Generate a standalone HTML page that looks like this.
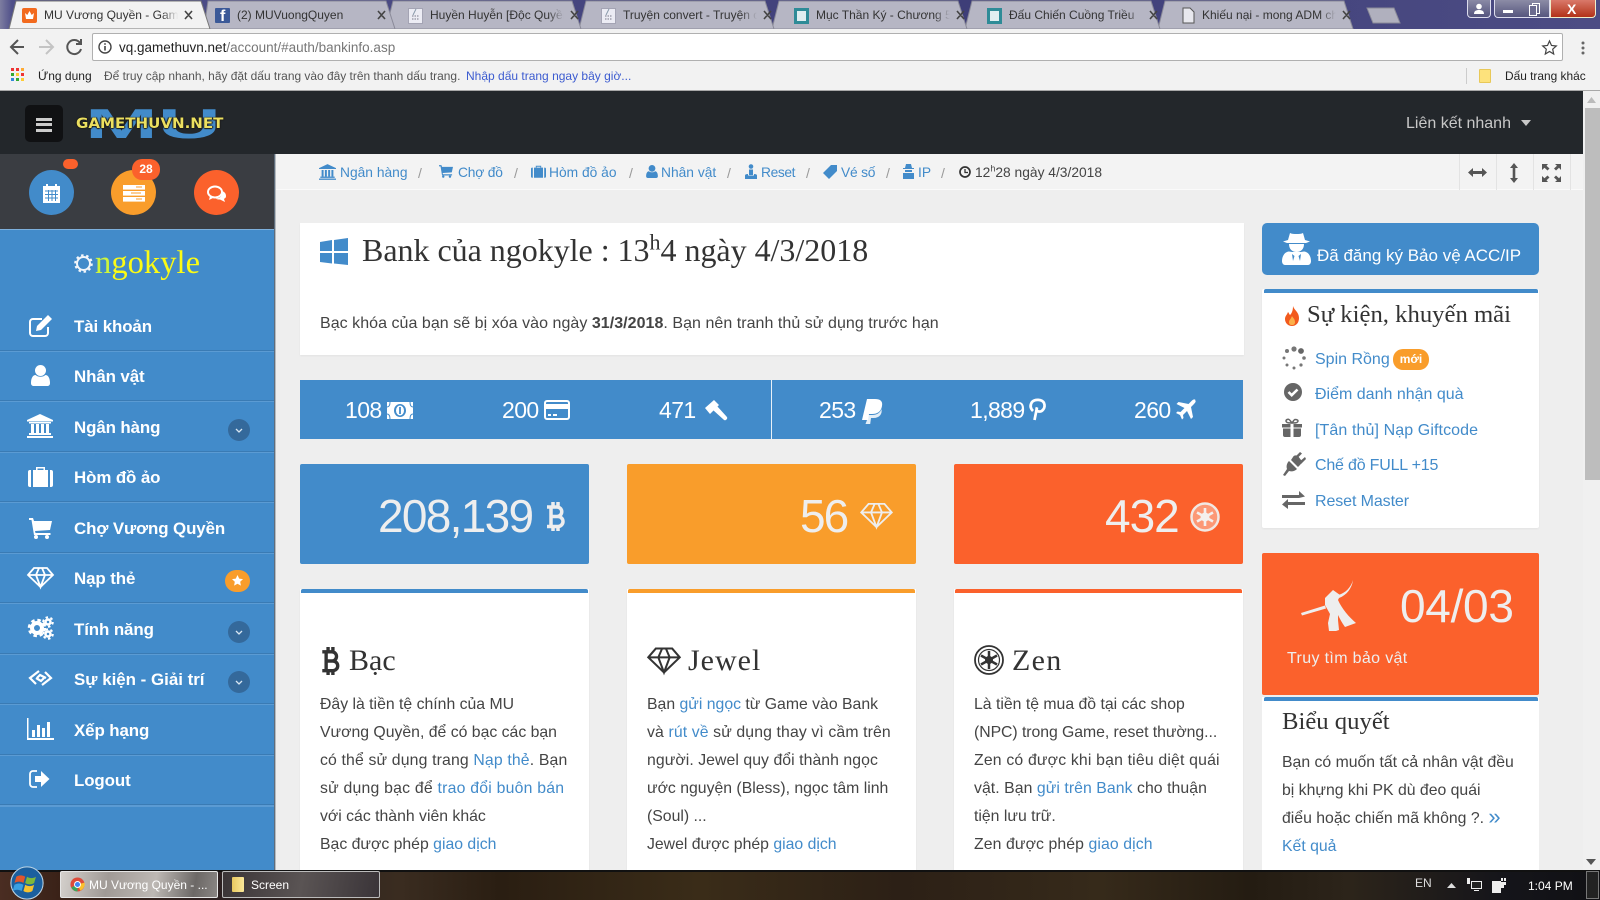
<!DOCTYPE html>
<html lang="vi"><head><meta charset="utf-8"><title>MU Vương Quyền</title>
<style>
*{box-sizing:border-box}
html,body{margin:0;padding:0;width:1600px;height:900px;overflow:hidden;background:#eee;font-family:"Liberation Sans",sans-serif;color:#444}
.a{position:absolute}
.t{position:absolute;white-space:nowrap;line-height:20px;font-size:15.8px}
.s{font-family:"Liberation Serif",serif;color:#333}
a,.l{color:#428bca;text-decoration:none}
svg{position:absolute;overflow:visible}
.tab{font-size:12px;color:#333;top:5px;width:134px;overflow:hidden;-webkit-mask-image:linear-gradient(90deg,#000 88%,transparent);mask-image:linear-gradient(90deg,#000 88%,transparent)}
.bc{font-size:13.8px;top:163px;color:#428bca}
.sl{color:#999;font-size:14px;top:163px}
.m{font-size:16.9px;font-weight:bold;color:#fff;left:74px;letter-spacing:-.1px}
.ln{left:0;width:274px;height:2px;background:#5b9bd3;border-top:1px solid #3a7bb4}
.cir{left:228px;width:22px;height:22px;border-radius:50%;background:#34699b}
.st{font-size:23px;color:#fff;top:400px;line-height:20px;letter-spacing:-.6px}
.card{background:#fff;top:589px;height:281px;box-shadow:0 1px 2px rgba(0,0,0,.05)}
.bar{left:1px;right:1px;top:0;height:4px;border-radius:2px 2px 0 0}
.num{font-size:46px;color:#eee;line-height:50px;top:491px}
.box{top:464px;height:100px;border-radius:2px}
.li{font-size:16px;color:#428bca;left:1315px}
</style></head><body>

<!-- browser chrome -->
<div class="a" style="left:0;top:0;width:1600px;height:29px;background:linear-gradient(90deg,#7d7da0 0,#50508a 12px,#3e3e78 60%,#4c4c84 100%)"></div>
<svg style="left:0;top:0" width="1600" height="30">
<g fill="#b6b6c4" stroke="#8a8a98" stroke-width="1">
<polygon points="1158,29 1165,1 1344,1 1353,29"/>
<polygon points="965,29 972,1 1151,1 1160,29"/>
<polygon points="772,29 779,1 958,1 967,29"/>
<polygon points="579,29 586,1 765,1 774,29"/>
<polygon points="386,29 393,1 572,1 581,29"/>
<polygon points="204,29 208,1 386,1 395,29" />
<polygon points="1373,23 1367,8 1394,8 1400,23" fill="#b0b0be"/>
</g>
<polygon points="9,29 16,1 201,1 210,29" fill="#f2f2f2" stroke="#777"/>
</svg>
<!-- favicons -->
<div class="a" style="left:22px;top:8px;width:15px;height:15px;background:#f26a1e;border-radius:2px"></div>
<svg style="left:24px;top:10px" width="11" height="11" viewBox="0 0 11 11"><path d="M1 3l2.300 2L5.500 1l2.200 4L10 3 9 9H2z" fill="#fff"/></svg>
<div class="a" style="left:215px;top:8px;width:15px;height:15px;background:#3b5998;border-radius:1px"></div>
<div class="t" style="left:220px;top:7px;font-size:16px;font-weight:bold;color:#fff">f</div>
<svg style="left:408px;top:8px" width="15" height="16" viewBox="0 0 15 16"><rect x=".5" y=".5" width="14" height="15" fill="#ececf4" stroke="#a4a4b4"/><path d="M4 8h7M4 11h7" stroke="#778" stroke-width="1" stroke-dasharray="1.500 1"/><path d="M8 1L5 7" stroke="#89a" /></svg>
<svg style="left:601px;top:8px" width="15" height="16" viewBox="0 0 15 16"><rect x=".5" y=".5" width="14" height="15" fill="#ececf4" stroke="#a4a4b4"/><path d="M4 8h7M4 11h7" stroke="#778" stroke-width="1" stroke-dasharray="1.500 1"/><path d="M8 1L5 7" stroke="#89a" /></svg>
<div class="a" style="left:794px;top:8px;width:15px;height:16px;background:#dfeef0;border:3px solid #2e8b97"></div>
<div class="a" style="left:987px;top:8px;width:15px;height:16px;background:#dfeef0;border:3px solid #2e8b97"></div>
<svg style="left:1182px;top:7px" width="13" height="17" viewBox="0 0 13 17"><path d="M1 1h7l4 4v11H1z" fill="#e8e8ee" stroke="#555"/></svg>
<div class="t tab" style="left:44px">MU Vương Quyền - Game</div>
<div class="t tab" style="left:237px">(2) MUVuongQuyen</div>
<div class="t tab" style="left:430px">Huyền Huyễn [Độc Quyền]</div>
<div class="t tab" style="left:623px">Truyện convert - Truyện chữ</div>
<div class="t tab" style="left:816px">Mục Thần Ký - Chương 5 abc</div>
<div class="t tab" style="left:1009px">Đấu Chiến Cuồng Triều</div>
<div class="t tab" style="left:1202px">Khiếu nại - mong ADM cho</div>
<svg style="left:0;top:0" width="1400" height="30" fill="none" stroke="#444" stroke-width="1.600">
<path d="M185 11l7 8M192 11l-7 8M378 11l7 8M385 11l-7 8M571 11l7 8M578 11l-7 8M764 11l7 8M771 11l-7 8M957 11l7 8M964 11l-7 8M1150 11l7 8M1157 11l-7 8M1343 11l7 8M1350 11l-7 8"/>
</svg>
<!-- window controls -->
<div class="a" style="left:1467px;top:0;width:24px;height:18px;background:linear-gradient(#8a8aa6,#54547e);border:1px solid #dde;border-top:0;border-radius:0 0 4px 4px"></div>
<svg style="left:1473px;top:3px" width="12" height="12"><circle cx="6" cy="3.500" r="2.800" fill="#fff"/><path d="M1 11c0-3 2-4 5-4s5 1 5 4z" fill="#fff"/></svg>
<div class="a" style="left:1494px;top:0;width:56px;height:18px;background:linear-gradient(#8c8ca6,#56567e);border:1px solid #dde;border-top:0;border-radius:0 0 0 4px"></div>
<div class="a" style="left:1503px;top:10px;width:10px;height:3px;background:#fff"></div>
<div class="a" style="left:1532px;top:3px;width:8px;height:11px;border:1.500px solid #fff"></div>
<div class="a" style="left:1529px;top:5px;width:8px;height:11px;border:1.500px solid #fff;background:#6c6c90"></div>
<div class="a" style="left:1550px;top:0;width:46px;height:18px;background:linear-gradient(#d9796a,#b23218);border:1px solid #eec;border-top:0;border-radius:0 0 4px 0"></div>
<div class="t" style="left:1567px;top:2px;font-size:14px;line-height:14px;font-weight:bold;color:#fff">X</div>

<!-- toolbar -->
<div class="a" style="left:0;top:29px;width:1600px;height:62px;background:#f2f2f2;border-bottom:1px solid #a8a8a8"></div>
<svg style="left:0;top:30px" width="90" height="30" fill="none" stroke-width="2">
<path d="M24 17H12M18 10l-7 7 7 7" stroke="#555"/>
<path d="M39 17h13M46 10l7 7-7 7" stroke="#c4c4c4"/>
<path d="M80 13a7 7 0 1 0 1 6M81 9v5h-5" stroke="#555"/>
</svg>
<div class="a" style="left:92px;top:33px;width:1471px;height:28px;background:#fff;border:1px solid #b0b0b0;border-radius:2px"></div>
<svg style="left:98px;top:40px" width="14" height="14" viewBox="0 0 14 14"><circle cx="7" cy="7" r="6" fill="none" stroke="#444" stroke-width="1.400"/><path d="M7 6v4.500M7 3.200v1.600" stroke="#444" stroke-width="1.600"/></svg>
<div class="t" style="left:119px;top:38px;font-size:13.500px"><span style="color:#222">vq.gamethuvn.net</span><span style="color:#777">/account/#auth/bankinfo.asp</span></div>
<svg style="left:1542px;top:40px" width="15" height="15" viewBox="0 0 15 15"><path d="M7.500 1l2 4.500 4.800.5-3.600 3.200 1 4.800-4.200-2.500-4.200 2.500 1-4.800L.7 6l4.800-.5z" fill="none" stroke="#444" stroke-width="1.200"/></svg>
<svg style="left:1580px;top:41px" width="6" height="14"><circle cx="3" cy="2" r="1.500" fill="#666"/><circle cx="3" cy="7" r="1.500" fill="#666"/><circle cx="3" cy="12" r="1.500" fill="#666"/></svg>
<!-- bookmarks -->
<svg style="left:11px;top:68px" width="14" height="14"><g><rect width="3" height="3" fill="#e33"/><rect x="5" width="3" height="3" fill="#e33"/><rect x="10" width="3" height="3" fill="#fa3"/><rect y="5" width="3" height="3" fill="#3a3"/><rect x="5" y="5" width="3" height="3" fill="#fc3"/><rect x="10" y="5" width="3" height="3" fill="#e33"/><rect y="10" width="3" height="3" fill="#38d"/><rect x="5" y="10" width="3" height="3" fill="#3a3"/><rect x="10" y="10" width="3" height="3" fill="#fc3"/></g></svg>
<div class="t" style="left:38px;top:66px;font-size:12px;color:#222">Ứng dụng</div>
<div class="t" style="left:104px;top:66px;font-size:11.950px;color:#555">Để truy cập nhanh, hãy đặt dấu trang vào đây trên thanh dấu trang.</div>
<div class="t" style="left:466px;top:66px;font-size:12px;color:#3c5bd0">Nhập dấu trang ngay bây giờ...</div>
<div class="a" style="left:1466px;top:68px;width:1px;height:16px;background:#ccc"></div>
<div class="a" style="left:1479px;top:69px;width:12px;height:14px;background:#fde27c;border:1px solid #e8c858;border-radius:1px"></div>
<div class="t" style="left:1505px;top:66px;font-size:11.900px;color:#222">Dấu trang khác</div>

<!-- top nav -->
<div class="a" style="left:0;top:91px;width:1583px;height:63px;background:#23272b"></div>
<div class="a" style="left:25px;top:105px;width:38px;height:37px;background:#101113;border-radius:5px"></div>
<div class="a" style="left:36px;top:118px;width:16px;height:3px;background:#ccc"></div>
<div class="a" style="left:36px;top:123px;width:16px;height:3px;background:#ccc"></div>
<div class="a" style="left:36px;top:129px;width:16px;height:3px;background:#ccc"></div>
<div class="t" style="left:85px;top:106px;font-size:42px;line-height:36px;font-weight:bold;color:#428bca;transform:scaleX(2.080);transform-origin:0 0">MU</div>
<div class="t" style="left:76px;top:114px;font-family:'DejaVu Sans',sans-serif;font-size:14px;font-weight:bold;color:#ece060;text-shadow:0 0 1px #000,0 1px 1px #222,1px 0 1px #222,-1px 0 1px #222;transform:scaleX(1.075);transform-origin:0 0">GAMETHUVN.NET</div>
<div class="t" style="left:1406px;top:114px;font-size:16px;color:#c8c8c8">Liên kết nhanh</div>
<svg style="left:1521px;top:120px" width="11" height="7"><path d="M0 0h10L5 6z" fill="#c8c8c8"/></svg>

<!-- scrollbar -->
<div class="a" style="left:1583px;top:91px;width:17px;height:779px;background:#f0f0f0"></div>
<div class="a" style="left:1585px;top:108px;width:15px;height:372px;background:#bdbdbd"></div>
<svg style="left:1587px;top:97px" width="10" height="7"><path d="M0 6h9L4.500 0z" fill="#bbb"/></svg>
<svg style="left:1586px;top:859px" width="10" height="7"><path d="M0 0h10L5 6z" fill="#555"/></svg>

<!-- sidebar -->
<div class="a" style="left:0;top:154px;width:274px;height:75px;background:#3a3d42"></div>
<div class="a" style="left:0;top:229px;width:274px;height:641px;background:#428bca;border-top:1px solid #7db0dc"></div>
<div class="a" style="left:274px;top:154px;width:2px;height:716px;background:linear-gradient(90deg,#33465a,rgba(0,0,0,.05))"></div>
<div class="a" style="left:29px;top:170px;width:45px;height:45px;border-radius:50%;background:#428bca"></div>
<div class="a" style="left:111px;top:170px;width:45px;height:45px;border-radius:50%;background:#f99d2b"></div>
<div class="a" style="left:194px;top:170px;width:45px;height:45px;border-radius:50%;background:#fb612c"></div>
<div class="a" style="left:63px;top:159px;width:15px;height:10px;border-radius:5px;background:#fb612c"></div>
<div class="a" style="left:132px;top:159px;width:28px;height:21px;border-radius:10px;background:#fb612c;color:#fff;font-size:12px;font-weight:bold;text-align:center;line-height:21px">28</div>
<svg style="left:42px;top:183px" width="19" height="20" viewBox="0 0 19 20"><path d="M1 3h3V1h2v2h7V1h2v2h3v17H1z" fill="#fff"/><path d="M3 8h13M3 11.500h13M3 15h13M6.500 7v11M10 7v11M13.500 7v11" stroke="#428bca" stroke-width="1" fill="none"/></svg>
<svg style="left:123px;top:185px" width="22" height="17" viewBox="0 0 22 17" fill="#fff"><rect width="22" height="4.600"/><rect y="6" width="22" height="4.600"/><rect y="12" width="22" height="4.600"/><path d="M13 2h6M8 8h10M13 14h6" stroke="#f99d2b" stroke-width="1"/></svg>
<svg style="left:206px;top:185px" width="21" height="18" viewBox="0 0 21 18"><ellipse cx="9" cy="7" rx="7" ry="5.500" fill="none" stroke="#fff" stroke-width="2"/><path d="M4 11l-1 4 5-2.500zM16 6c3 1 4 3 4 5s-1 2-2 3l1 3-5-2.500c-2 0-3 0-4-1 3 0 7-2 6-7.500z" fill="#fff"/></svg>

<svg style="left:74px;top:254px" width="19" height="19" viewBox="0 0 19 19"><circle cx="9.500" cy="9.500" r="6.500" fill="none" stroke="#f3f6fa" stroke-width="2"/><circle cx="9.500" cy="9.500" r="8.300" fill="none" stroke="#f3f6fa" stroke-width="2" stroke-dasharray="2.500 2.700"/></svg>
<div class="t s" style="left:95px;top:247px;font-size:32.500px;line-height:32px;color:#fbfb15;letter-spacing:.05px"><span style="color:#cdf53c">n</span>gokyle</div>

<div class="t m" style="top:317px">Tài khoản</div>
<div class="t m" style="top:367px">Nhân vật</div>
<div class="t m" style="top:418px">Ngân hàng</div>
<div class="t m" style="top:468px">Hòm đồ ảo</div>
<div class="t m" style="top:519px">Chợ Vương Quyền</div>
<div class="t m" style="top:569px">Nạp thẻ</div>
<div class="t m" style="top:620px">Tính năng</div>
<div class="t m" style="top:670px;letter-spacing:0">Sự kiện - Giải trí</div>
<div class="t m" style="top:721px">Xếp hạng</div>
<div class="t m" style="top:771px">Logout</div>

<div class="a ln" style="top:350px"></div><div class="a ln" style="top:400px"></div><div class="a ln" style="top:451px"></div><div class="a ln" style="top:501px"></div><div class="a ln" style="top:552px"></div><div class="a ln" style="top:602px"></div><div class="a ln" style="top:653px"></div><div class="a ln" style="top:703px"></div><div class="a ln" style="top:754px"></div><div class="a ln" style="top:804px;height:3px"></div>

<!-- sidebar icons -->
<svg style="left:28px;top:314px" width="26" height="24" viewBox="0 0 26 24"><path d="M20 13v6a3 3 0 01-3 3H5a3 3 0 01-3-3V8a3 3 0 013-3h9" fill="none" stroke="#fff" stroke-width="2"/><path d="M9 12L20 1l4 4-11 11-5 1z" fill="#fff"/></svg>
<svg style="left:31px;top:365px" width="19" height="21" viewBox="0 0 19 21" fill="#fff"><circle cx="9.500" cy="5.500" r="5.500"/><path d="M0 18c0-5 2-8 4.500-8 1.500 1.200 3 1.800 5 1.800s3.500-.6 5-1.800c2.500 0 4.500 3 4.500 8 0 2-1 3-3 3H3c-2 0-3-1-3-3z"/></svg>
<svg style="left:27px;top:414px" width="26" height="24" viewBox="0 0 26 24" fill="#fff"><path d="M13 0l13 6v1.500H0V6z"/><rect x="2" y="8" width="22" height="1.500"/><path d="M4 10h3v9H4zM9 10h3v9H9zM14 10h3v9h-3zM19 10h3v9h-3z"/><rect x="2" y="19" width="22" height="2"/><rect y="22" width="26" height="2"/></svg>
<svg style="left:28px;top:466px" width="25" height="21" viewBox="0 0 25 21" fill="#fff"><path d="M8 4V1h9v3h-1.500V2.500h-6V4z"/><path d="M0 6a2 2 0 012-2h1v17H2a2 2 0 01-2-2zM5 4h15v17H5zM22 4h1a2 2 0 012 2v13a2 2 0 01-2 2h-1z"/></svg>
<svg style="left:29px;top:518px" width="23" height="21" viewBox="0 0 23 21" fill="#fff"><path d="M0 0h4l1 3h18l-2 9-15 1 .5 2h15v2H5L2.500 2H0z"/><circle cx="7" cy="19" r="2"/><circle cx="18" cy="19" r="2"/></svg>
<svg style="left:27px;top:567px" width="27" height="21" viewBox="0 0 27 21"><path d="M7 1h13l6 7-12.500 12L1 8z M1 8h25 M9 8l4.500 12L18 8 M9 8l3-7 M18 8l-3-7" fill="none" stroke="#fff" stroke-width="1.800"/></svg>
<svg style="left:27px;top:616px" width="27" height="24" viewBox="0 0 27 24" fill="none" stroke="#fff"><circle cx="10" cy="12" r="5" stroke-width="4"/><circle cx="10" cy="12" r="8" stroke-width="2.500" stroke-dasharray="3.500 2.800"/><circle cx="21" cy="6" r="2.500" stroke-width="2.500"/><circle cx="21" cy="6" r="4.800" stroke-width="2" stroke-dasharray="2.500 2.500"/><circle cx="21" cy="18" r="2.500" stroke-width="2.500"/><circle cx="21" cy="18" r="4.800" stroke-width="2" stroke-dasharray="2.500 2.500"/></svg>
<svg style="left:28px;top:669px" width="25" height="18" viewBox="0 0 25 18" fill="none" stroke="#fff" stroke-width="2.200"><path d="M11 2L2 9l6 6M14 16l9-7-6-6M9 9l3-3 6 3M16 9l-3 3-5-3"/></svg>
<svg style="left:27px;top:718px" width="27" height="22" viewBox="0 0 27 22" fill="#fff"><path d="M0 0h1.500v20H27v2H0z"/><rect x="5" y="12" width="3" height="7"/><rect x="10" y="7" width="3" height="12"/><rect x="15" y="10" width="3" height="9"/><rect x="20" y="4" width="3" height="15"/></svg>
<svg style="left:29px;top:770px" width="21" height="18" viewBox="0 0 21 18"><path d="M8 1H4a3 3 0 00-3 3v10a3 3 0 003 3h4" fill="none" stroke="#fff" stroke-width="1.800"/><path d="M6 6h6V1l8.500 8-8.500 8v-5H6z" fill="#fff"/></svg>

<div class="a cir" style="top:419px"></div><div class="a cir" style="top:621px"></div><div class="a cir" style="top:671px"></div>
<svg style="left:235px;top:428px" width="8" height="5"><path d="M1 1l3 3 3-3" stroke="#d8e6f2" stroke-width="1.300" fill="none"/></svg>
<svg style="left:235px;top:630px" width="8" height="5"><path d="M1 1l3 3 3-3" stroke="#d8e6f2" stroke-width="1.300" fill="none"/></svg>
<svg style="left:235px;top:680px" width="8" height="5"><path d="M1 1l3 3 3-3" stroke="#d8e6f2" stroke-width="1.300" fill="none"/></svg>
<div class="a" style="left:225px;top:570px;width:25px;height:22px;border-radius:11px;background:#f99d2b"></div>
<svg style="left:232px;top:575px" width="11" height="11" viewBox="0 0 11 11"><path d="M5.500 0l1.700 3.600 3.800.5-2.800 2.600.7 3.900-3.400-1.900-3.400 1.900.7-3.900L0 4.100l3.800-.5z" fill="#fff"/></svg>

<!-- breadcrumb -->
<div class="a" style="left:276px;top:154px;width:1307px;height:36px;background:#f3f3f3;border-bottom:1px solid #fafafa"></div>
<svg style="left:319px;top:164px" width="17" height="16" viewBox="0 0 26 24" fill="#428bca"><path d="M13 0l13 6v1.500H0V6z"/><path d="M4 9h3v10H4zM9 9h3v10H9zM14 9h3v10h-3zM19 9h3v10h-3z"/><rect x="2" y="19" width="22" height="2"/><rect y="22" width="26" height="2"/></svg>
<svg style="left:439px;top:165px" width="14" height="13" viewBox="0 0 23 21" fill="#428bca"><path d="M0 0h4l1 3h18l-2 9-15 1 .5 2h15v2H5L2.500 2H0z"/><circle cx="7" cy="19" r="2"/><circle cx="18" cy="19" r="2"/></svg>
<svg style="left:531px;top:165px" width="15" height="13" viewBox="0 0 25 21" fill="#428bca"><path d="M8 4V1h9v3h-1.500V2.500h-6V4z"/><path d="M0 6a2 2 0 012-2h1v17H2a2 2 0 01-2-2zM5 4h15v17H5zM22 4h1a2 2 0 012 2v13a2 2 0 01-2 2h-1z"/></svg>
<svg style="left:646px;top:165px" width="12" height="13" viewBox="0 0 19 21" fill="#428bca"><circle cx="9.500" cy="5.500" r="5.500"/><path d="M0 18c0-5 2-8 4.500-8 1.500 1.200 3 1.800 5 1.800s3.500-.6 5-1.800c2.500 0 4.500 3 4.500 8 0 2-1 3-3 3H3c-2 0-3-1-3-3z"/></svg>
<svg style="left:745px;top:164px" width="12" height="15" viewBox="0 0 12 15" fill="#428bca"><circle cx="6" cy="2.500" r="2.300"/><path d="M4 5.500h4V11H4zM0 11.500c0-1 1-1.500 3-1.500v1.500h6V10c2 0 3 .5 3 1.500V15H0z"/></svg>
<svg style="left:823px;top:165px" width="14" height="14" viewBox="0 0 14 14" fill="#428bca"><path d="M8 0h6v6l-8 8-6-6z"/></svg>
<svg style="left:903px;top:164px" width="11" height="15" viewBox="0 0 11 15" fill="#428bca"><path d="M3 0h5l1 4h2v1H0V4h2zM2 6h7v2H2zM0 9h11v6H0z"/></svg>
<svg style="left:959px;top:166px" width="12" height="12" viewBox="0 0 12 12"><circle cx="6" cy="6" r="5" fill="none" stroke="#333" stroke-width="1.700"/><path d="M6 3v3.500H9" fill="none" stroke="#333" stroke-width="1.300"/></svg>
<div class="t bc" style="left:340px">Ngân hàng</div><div class="t sl" style="left:418px">/</div>
<div class="t bc" style="left:458px;letter-spacing:-.2px">Chợ đồ</div><div class="t sl" style="left:514px">/</div>
<div class="t bc" style="left:549px">Hòm đồ ảo</div><div class="t sl" style="left:629px">/</div>
<div class="t bc" style="left:661px">Nhân vật</div><div class="t sl" style="left:727px">/</div>
<div class="t bc" style="left:761px;letter-spacing:-.4px">Reset</div><div class="t sl" style="left:806px">/</div>
<div class="t bc" style="left:841px;letter-spacing:-.2px">Vé số</div><div class="t sl" style="left:886px">/</div>
<div class="t bc" style="left:918px">IP</div><div class="t sl" style="left:941px">/</div>
<div class="t bc" style="left:975px;color:#444">12<sup style="font-size:9px;line-height:0">h</sup>28 ngày 4/3/2018</div>
<div class="a" style="left:1459px;top:154px;width:1px;height:36px;background:#e3e3e3"></div><div class="a" style="left:1496px;top:154px;width:1px;height:36px;background:#e3e3e3"></div><div class="a" style="left:1533px;top:154px;width:1px;height:36px;background:#e3e3e3"></div><div class="a" style="left:1570px;top:154px;width:1px;height:36px;background:#e3e3e3"></div>
<svg style="left:1468px;top:167px" width="19" height="11" viewBox="0 0 19 11" fill="#555"><path d="M0 5.500L5 1v3h9V1l5 4.500L14 10V7H5v3z"/></svg>
<svg style="left:1509px;top:163px" width="10" height="20" viewBox="0 0 10 20" fill="#555"><path d="M5 0l4 5H6.300v10H9l-4 5-4-5h2.700V5H1z"/></svg>
<svg style="left:1542px;top:164px" width="19" height="18" viewBox="0 0 19 18" fill="#555"><path d="M0 0h6L4.500 1.800l3 2.700-2 2-3-2.700L0 6zM19 0v6l-2-2.200-3 2.700-2-2 3-2.700L13 0zM0 18v-6l2.500 2.200 3-2.700 2 2-3 2.700L6 18zM19 18h-6l2-1.800-3-2.700 2-2 3 2.700 2-2.200z"/></svg>

<!-- main card -->
<div class="a" style="left:300px;top:223px;width:944px;height:132px;background:#fff;box-shadow:0 1px 2px rgba(0,0,0,.05)"></div>
<svg style="left:320px;top:238px" width="28" height="27" viewBox="0 0 28 27" fill="#428bca"><path d="M0 4l12-2v11H0zM14 2L28 0v13H14zM0 15h12v10.500L0 24zM14 15h14v12l-14-1.500z"/></svg>
<div class="t s" style="left:362px;top:233px;font-size:32px;line-height:34px;letter-spacing:-.02px">Bank của ngokyle : 13<sup style="font-size:22px;line-height:0">h</sup>4 ngày 4/3/2018</div>
<div class="t" style="left:320px;top:314px;font-size:16px;letter-spacing:.04px">Bạc khóa của bạn sẽ bị xóa vào ngày <b>31/3/2018</b>. Bạn nên tranh thủ sử dụng trước hạn</div>

<!-- stats bar -->
<div class="a" style="left:300px;top:380px;width:943px;height:59px;background:#428bca"></div>
<div class="a" style="left:771px;top:380px;width:1px;height:59px;background:#e8f1f8"></div>
<div class="t st" style="left:345px">108</div><div class="t st" style="left:502px">200</div><div class="t st" style="left:659px">471</div><div class="t st" style="left:819px">253</div><div class="t st" style="left:970px">1,889</div><div class="t st" style="left:1134px">260</div>
<svg style="left:387px;top:402px" width="26" height="17" viewBox="0 0 26 17"><rect width="26" height="17" fill="#fff"/><ellipse cx="13" cy="8.500" rx="6" ry="6.500" fill="#428bca"/><ellipse cx="13" cy="8.500" rx="4" ry="5" fill="#fff"/><path d="M13 5v7" stroke="#428bca" stroke-width="1.800"/><path d="M0 5c2 0 3-2 3-5M26 5c-2 0-3-2-3-5M0 12c2 0 3 2 3 5M26 12c-2 0-3 2-3 5" stroke="#428bca" fill="none"/></svg>
<svg style="left:544px;top:400px" width="26" height="20" viewBox="0 0 26 20"><rect x="1" y="1" width="24" height="18" rx="2" fill="none" stroke="#fff" stroke-width="2"/><rect x="1" y="4" width="24" height="5" fill="#fff"/><path d="M4 15h3M9 15h4" stroke="#fff" stroke-width="2"/></svg>
<svg style="left:702px;top:399px" width="25" height="24" viewBox="0 0 25 24" fill="#fff"><path d="M3 9l9-8 5 5-9 9zM11 11l4-4 9.500 10.500c1 1 1 2 0 3s-2 1-3 0z"/></svg>
<svg style="left:862px;top:399px" width="21" height="25" viewBox="0 0 21 25" fill="#fff"><path d="M5 0h8c5 0 8 2 7 7-1 6-5 8-10 8H7l-1 6H0z"/><path d="M5 21l1-5h4c5 0 8-2 9.500-6 1 5-2 9-8 9H9l-.8 6H3.500z" opacity=".85"/></svg>
<svg style="left:1029px;top:398px" width="18" height="23" viewBox="0 0 18 23" fill="none" stroke="#fff" stroke-width="2.700"><path d="M4 13C1 10 1 7 3 4c3-3 10-3 12 1 2 5-2 9-5 8.500-2 0-3-2-2-4L5.500 22"/></svg>
<svg style="left:1176px;top:400px" width="20" height="19" viewBox="0 0 20 19" fill="#fff"><path d="M19 0c1 1 1 2-1 4l-3 3 2 10-2 2-4-8-4 4 .5 3-1.500 1.500L4 15 0 13l1.500-1.500 3 .5 4-4-8-4 2-2 10 2 3-3c2-2 3-2 4-1z"/></svg>

<!-- colored boxes -->
<div class="a box" style="left:300px;width:289px;background:#428bca"></div>
<div class="a box" style="left:627px;width:289px;background:#f99d2b"></div>
<div class="a box" style="left:954px;width:289px;background:#fb612c"></div>
<div class="t num" style="left:378px;letter-spacing:-1.700px">208,139</div>
<div class="t num" style="left:800px;letter-spacing:-2px">56</div>
<div class="t num" style="left:1105px;letter-spacing:-1px">432</div>
<svg style="left:545px;top:502px" width="20" height="29" viewBox="0 0 20 29" fill="none" stroke="#eee" stroke-width="3.500"><path d="M2 5h10a4.500 4.500 0 010 9.500H6M6 14.500h7a5 5 0 010 10H2M6 5v19.500M8 0v5M13 0v5M8 24.500V29M13 24.500V29"/></svg>
<svg style="left:860px;top:502px" width="33" height="27" viewBox="0 0 27 21"><path d="M7 1h13l6 7-12.500 12L1 8z M1 8h25 M9 8l4.500 12L18 8 M9 8l3-7 M18 8l-3-7" fill="none" stroke="#eee" stroke-width="1.500"/></svg>
<svg style="left:1190px;top:502px" width="30" height="30" viewBox="0 0 30 30"><circle cx="15" cy="15" r="13.500" fill="rgba(255,255,255,.35)" stroke="#f2e8e2" stroke-width="2.500"/><path d="M15 6v18M7 10.500l16 9M23 10.500l-16 9" stroke="#f4f0ee" stroke-width="2.600"/><circle cx="15" cy="15" r="4.500" fill="#f4f0ee"/></svg>

<!-- info cards -->
<div class="a card" style="left:300px;width:289px"><div class="a bar" style="background:#428bca"></div></div>
<div class="a card" style="left:627px;width:289px"><div class="a bar" style="background:#f99d2b"></div></div>
<div class="a card" style="left:954px;width:289px"><div class="a bar" style="background:#fb612c"></div></div>
<svg style="left:320px;top:647px" width="20" height="28" viewBox="0 0 20 29" fill="none" stroke="#333" stroke-width="3.500"><path d="M2 5h10a4.500 4.500 0 010 9.500H6M6 14.500h7a5 5 0 010 10H2M6 5v19.500M8 0v5M13 0v5M8 24.500V29M13 24.500V29"/></svg>
<div class="t s" style="left:349px;top:643px;font-size:30px;line-height:36px">Bạc</div>
<svg style="left:647px;top:647px" width="34" height="27" viewBox="0 0 27 21"><path d="M7 1h13l6 7-12.500 12L1 8z M1 8h25 M9 8l4.500 12L18 8 M9 8l3-7 M18 8l-3-7" fill="none" stroke="#333" stroke-width="1.600"/></svg>
<div class="t s" style="left:688px;top:643px;font-size:30px;line-height:36px;letter-spacing:1px">Jewel</div>
<svg style="left:974px;top:645px" width="30" height="30" viewBox="0 0 30 30"><circle cx="15" cy="15" r="14" fill="none" stroke="#333" stroke-width="1.800"/><circle cx="15" cy="15" r="10.500" fill="none" stroke="#333" stroke-width="1.200"/><path d="M15 6v18M7 10.500l16 9M23 10.500l-16 9" stroke="#333" stroke-width="2.500"/><circle cx="15" cy="15" r="4" fill="#333"/></svg>
<div class="t s" style="left:1012px;top:643px;font-size:30px;line-height:36px;letter-spacing:1.300px">Zen</div>

<div class="t" style="left:320px;top:695px">Đây là tiền tệ chính của MU</div>
<div class="t" style="left:320px;top:723px">Vương Quyền, để có bạc các bạn</div>
<div class="t" style="left:320px;top:751px;letter-spacing:.15px">có thể sử dụng trang <span class="l">Nạp thẻ</span>. Bạn</div>
<div class="t" style="left:320px;top:779px;letter-spacing:.22px">sử dụng bạc để <span class="l">trao đổi buôn bán</span></div>
<div class="t" style="left:320px;top:807px">với các thành viên khác</div>
<div class="t" style="left:320px;top:835px">Bạc được phép <span class="l">giao dịch</span></div>

<div class="t" style="left:647px;top:695px">Bạn <span class="l">gửi ngọc</span> từ Game vào Bank</div>
<div class="t" style="left:647px;top:723px;letter-spacing:.12px">và <span class="l">rút về</span> sử dụng thay vì cầm trên</div>
<div class="t" style="left:647px;top:751px;letter-spacing:.06px">người. Jewel quy đổi thành ngọc</div>
<div class="t" style="left:647px;top:779px">ước nguyện (Bless), ngọc tâm linh</div>
<div class="t" style="left:647px;top:807px">(Soul) ...</div>
<div class="t" style="left:647px;top:835px">Jewel được phép <span class="l">giao dịch</span></div>

<div class="t" style="left:974px;top:695px">Là tiền tệ mua đồ tại các shop</div>
<div class="t" style="left:974px;top:723px;letter-spacing:-.05px">(NPC) trong Game, reset thường...</div>
<div class="t" style="left:974px;top:751px;letter-spacing:.18px">Zen có được khi bạn tiêu diệt quái</div>
<div class="t" style="left:974px;top:779px;letter-spacing:.06px">vật. Bạn <span class="l">gửi trên Bank</span> cho thuận</div>
<div class="t" style="left:974px;top:807px">tiện lưu trữ.</div>
<div class="t" style="left:974px;top:835px;letter-spacing:.1px">Zen được phép <span class="l">giao dịch</span></div>

<!-- right column -->
<div class="a" style="left:1262px;top:223px;width:277px;height:52px;background:#428bca;border-radius:5px"></div>
<svg style="left:1282px;top:232px" width="29" height="34" viewBox="0 0 29 34" fill="#fff"><path d="M8 1c2 1 4 1 6.500 1S19 2 21 1l2 7 5 1.500-4 1.500H5L1 9.500 6 8z"/><path d="M7 12h15c0 5-3 8-7.500 8S7 17 7 12z"/><path d="M5 20c2-1 4 0 5 0h9c1 0 3-1 5 0 3 1 5 5 5 9 0 2-1 4-3 4H3c-2 0-3-2-3-4 0-4 2-8 5-9z"/><path d="M10 22l1 7 1.500-5zM19 22l-1 7-1.500-5z" fill="#428bca"/></svg>
<div class="t" style="left:1317px;top:246px;font-size:17px;color:#fff">Đã đăng ký Bảo vệ ACC/IP</div>

<div class="a" style="left:1262px;top:289px;width:277px;height:239px;background:#fff;box-shadow:0 1px 2px rgba(0,0,0,.05);border-radius:2px"><div class="a bar" style="left:2px;right:1px;background:#428bca"></div></div>
<svg style="left:1284px;top:306px" width="16" height="20" viewBox="0 0 16 20"><path d="M9 0c1 4 6 6 6 12 0 5-3 8-7 8s-7-3-7-7c0-3 2-4 3-7 1 1 1 2 2 3 2-2 3-5 3-9z" fill="#f25a1d"/><path d="M8 10c1 2 3 3 3 6 0 2-1 3-3 3s-3-1-3-3c0-2 2-3 3-6z" fill="#fbb04a"/></svg>
<div class="t s" style="left:1307px;top:300px;font-size:24.700px;line-height:30px">Sự kiện, khuyến mãi</div>

<svg style="left:1282px;top:346px" width="24" height="24" viewBox="0 0 24 24" fill="#777"><circle cx="12" cy="3" r="2.600"/><circle cx="19" cy="5" r="2.900" fill="#666"/><circle cx="22" cy="12" r="1.800"/><circle cx="19" cy="19" r="1.600"/><circle cx="12" cy="22" r="1.500"/><circle cx="5" cy="19" r="1.500"/><circle cx="2" cy="12" r="1.500"/><circle cx="5" cy="5" r="2"/></svg>
<svg style="left:1284px;top:383px" width="18" height="18" viewBox="0 0 18 18"><circle cx="9" cy="9" r="9" fill="#666"/><path d="M4.500 9l3.200 3.200L13.500 6.500" fill="none" stroke="#fff" stroke-width="2.600"/></svg>
<svg style="left:1282px;top:419px" width="20" height="18" viewBox="0 0 20 18" fill="#666"><path d="M0 5h8.500v3.500H0zM11.500 5H20v3.500h-8.500zM1 9.500h7.500V18H3a2 2 0 01-2-2zM11.500 9.500H19V16a2 2 0 01-2 2h-5.500z"/><path d="M9 4C6 4 4 3.500 4 2S6 0 7 .5 9 3 10 4c1-1 2-3.500 3-3.500s3 0 3 1.500-2 2-5 2z" fill="none" stroke="#666" stroke-width="1.500"/></svg>
<svg style="left:1282px;top:452px" width="24" height="24" viewBox="0 0 24 24" fill="#666"><path d="M1 23l4-6c-1-3 0-6 2-8l8 8c-2 2-5 3-8 2l-4 5zM9 8l7 7 2-2c2-2 2-4 1-5l-3-4c-2-1-4-1-5 1z"/><path d="M13 5l5-5 2 1.500-5 5zM17 10l6-5 1 2-5 5z"/></svg>
<svg style="left:1282px;top:491px" width="23" height="18" viewBox="0 0 23 18" fill="#666"><path d="M0 4h17V0l6 5.500-6 1.500H0zM23 11H6V8l-6 5.500L6 18v-4h17z"/></svg>

<div class="t li" style="top:350px">Spin Rồng</div>
<div class="a" style="left:1393px;top:349px;width:36px;height:21px;border-radius:10px;background:#f99d2b;color:#fff;font-size:12px;font-weight:bold;line-height:21px;text-align:center">mới</div>
<div class="t li" style="top:385px">Điểm danh nhận quà</div>
<div class="t li" style="top:421px;letter-spacing:.1px">[Tân thủ] Nạp Giftcode</div>
<div class="t li" style="top:456px;letter-spacing:-.2px">Chế đồ FULL +15</div>
<div class="t li" style="top:492px;letter-spacing:-.1px">Reset Master</div>

<div class="a" style="left:1262px;top:553px;width:277px;height:142px;background:#fb612c;border-radius:2px"></div>
<svg style="left:1300px;top:578px" width="58" height="56" viewBox="0 0 58 56" fill="#eee"><path d="M1 35L25 27.500l1 3L2 37.500z"/><path d="M38 17C46 15 51 9 53 2 52 10 47 17 39 20z"/><path d="M25 20l8-8 7 5-1 3-1 2c4 9 11 17 18 23l-11 4c-3-4-5-8-7-12v5l1 10-3 1H29l-1-8 2-9-5-9z"/></svg>
<div class="t" style="left:1400px;top:581px;font-size:46px;line-height:50px;color:#eee;letter-spacing:-.3px">04/03</div>
<div class="t" style="left:1287px;top:649px;font-size:16px;color:#eee;letter-spacing:.35px">Truy tìm bảo vật</div>

<div class="a" style="left:1262px;top:697px;width:277px;height:173px;background:#fff"><div class="a bar" style="left:2px;right:1px;background:#428bca"></div></div>
<div class="t s" style="left:1282px;top:707px;font-size:24.700px;line-height:30px">Biểu quyết</div>
<div class="t" style="left:1282px;top:753px">Bạn có muốn tất cả nhân vật đều</div>
<div class="t" style="left:1282px;top:781px">bị khựng khi PK dù đeo quái</div>
<div class="t" style="left:1282px;top:809px">điểu hoặc chiến mã không ?. <span class="l" style="font-size:22px;line-height:0;position:relative;top:1px">»</span></div>
<div class="t l" style="left:1282px;top:837px">Kết quả</div>

<!-- taskbar -->
<div class="a" style="left:0;top:870px;width:1600px;height:30px;background:linear-gradient(90deg,#4a2d22 0,#3a2218 60px,#2a2022 240px,#3a2c20 400px,#2a1e12 500px,#3a2c18 700px,#2c2016 900px,#362a1a 1100px,#241c12 1250px,#2c241a 1350px,#15151a 1500px,#101014 1600px);border-top:2px solid #111"></div>
<div class="a" style="left:60px;top:871px;width:158px;height:27px;background:linear-gradient(100deg,#d4d0cc 0,#a09a96 30%,#bdb8b4 60%,#6c6866 85%,#8a8684 100%);border:1px solid #e6e6e6;border-radius:2px"></div>
<div class="a" style="left:222px;top:871px;width:158px;height:27px;background:linear-gradient(100deg,#3a3436,#5a5454 50%,#3a3438);border:1px solid #bbb;border-radius:2px"></div>
<svg style="left:8px;top:866px" width="38" height="34" viewBox="0 0 38 38"><circle cx="19" cy="19" r="18" fill="#1b5f9e" stroke="#bfd6e6" stroke-width="1.200"/><path d="M7 12c3-2 7-2 10 0l-2 7c-3-2-7-2-10 0z" fill="#e0562c"/><path d="M19 12c3 2 7 2 10 0l-2 7c-3 2-7 2-10 0z" fill="#7fb83a"/><path d="M5 21c3-2 7-2 10 0l-2 7c-3-2-7-2-10 0z" fill="#3aa0e2"/><path d="M17 21c3 2 7 2 10 0l-2 7c-3 2-7 2-10 0z" fill="#f6c12e"/></svg>
<svg style="left:70px;top:877px" width="15" height="15" viewBox="0 0 16 16"><circle cx="8" cy="8" r="7.500" fill="#dd4b3a"/><path d="M8 8L1.500 11A7.500 7.500 0 008 15.500z" fill="#3ba55c"/><path d="M8 8l3 6.500A7.500 7.500 0 0015.500 6z" fill="#fbc02d"/><circle cx="8" cy="8" r="3.200" fill="#4285f4" stroke="#fff"/></svg>
<div class="t" style="left:89px;top:875px;font-size:12px;color:#fff">MU Vương Quyền - ...</div>
<div class="a" style="left:232px;top:877px;width:12px;height:15px;background:linear-gradient(90deg,#e8c860,#fbe89a);border-radius:1px"></div>
<div class="t" style="left:251px;top:875px;font-size:12px;color:#fff">Screen</div>
<div class="t" style="left:1415px;top:873px;font-size:12px;color:#ddd">EN</div>
<svg style="left:1447px;top:883px" width="9" height="5"><path d="M0 5h9L4.500 0z" fill="#ddd"/></svg>
<svg style="left:1467px;top:878px" width="15" height="15" fill="#eee"><path d="M0 0h3v6H0zM4 3h11v8H4zM7 12h5v1H7z"/><path d="M5 4h9v6H5z" fill="#222"/></svg>
<svg style="left:1491px;top:878px" width="15" height="15" fill="#eee"><path d="M1 3h9v12H1zM10 0h2v3h-2zM13 0h2v3h-2zM9 4h6v3h-2v3H9z"/></svg>
<div class="t" style="left:1528px;top:876px;font-size:12px;color:#fff">1:04 PM</div>
<div class="a" style="left:1586px;top:871px;width:13px;height:28px;border:1px solid #777;background:#222"></div>

</body></html>
